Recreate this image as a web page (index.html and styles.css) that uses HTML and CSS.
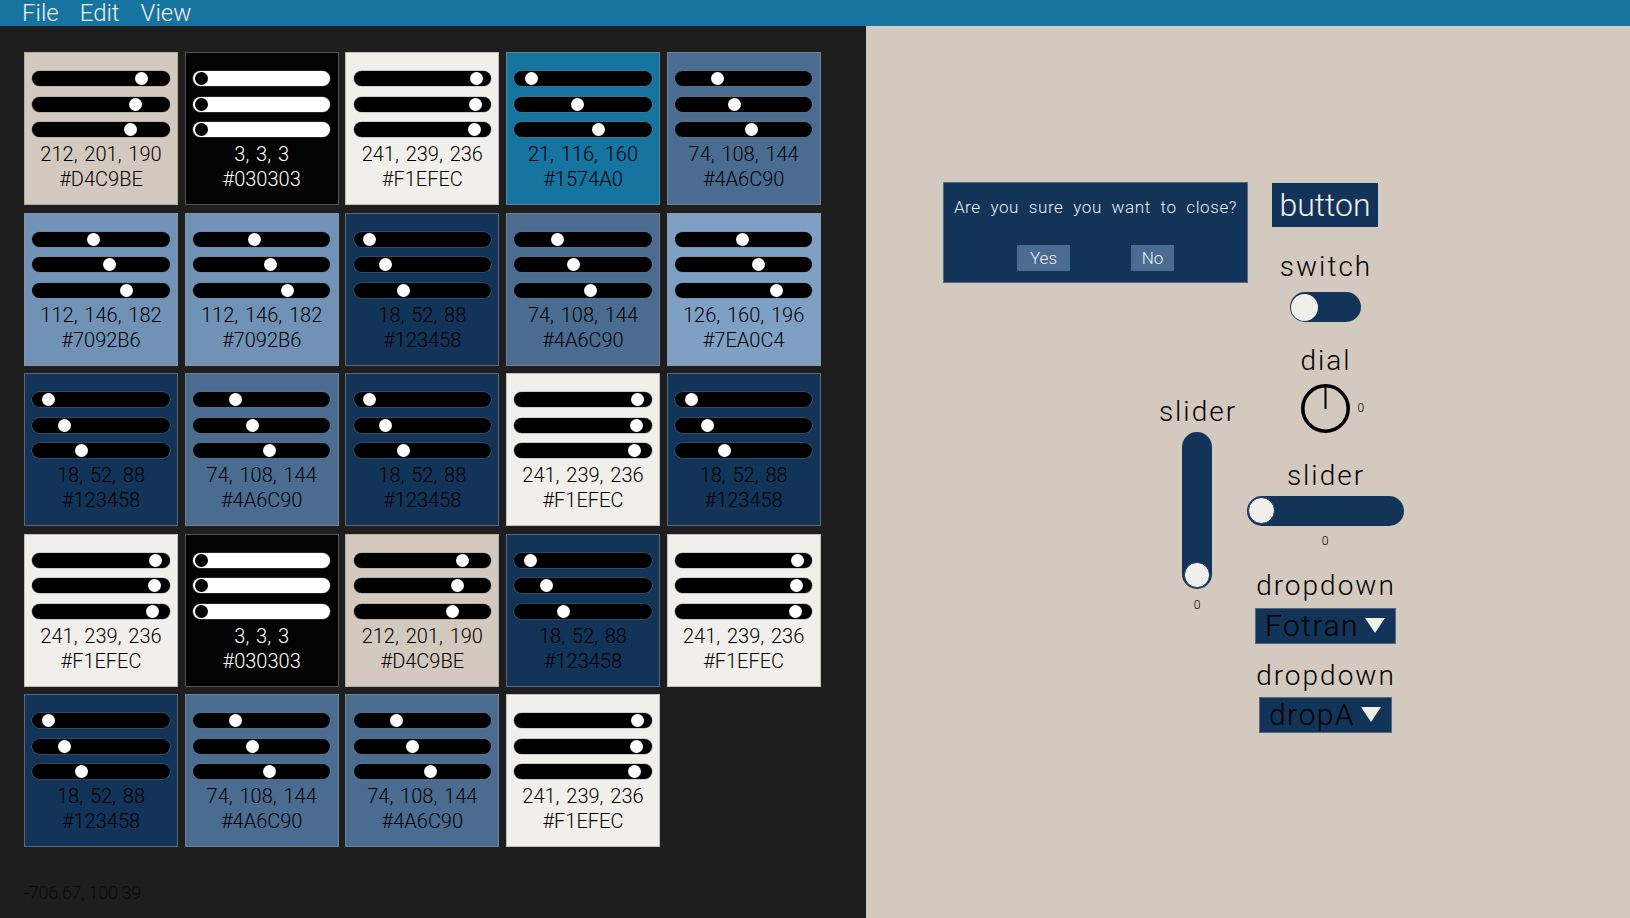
FILE: index.html
```html
<!DOCTYPE html>
<html lang="en">
<head>
<meta charset="utf-8">
<title>Palette</title>
<link rel="stylesheet" href="styles.css">
</head>
<body>
<header class="menubar">
  <span class="menu-item">File</span>
  <span class="menu-item">Edit</span>
  <span class="menu-item">View</span>
</header>
<div class="main">
  <section class="swatches">
    <div class="grid">
      <div class="tile c-d4"><div class="track"><span class="knob" style="--v:212"></span></div><div class="track"><span class="knob" style="--v:201"></span></div><div class="track"><span class="knob" style="--v:190"></span></div><p class="info">212, 201, 190<br>#D4C9BE</p></div>
      <div class="tile c-03"><div class="track"><span class="knob" style="--v:3"></span></div><div class="track"><span class="knob" style="--v:3"></span></div><div class="track"><span class="knob" style="--v:3"></span></div><p class="info">3, 3, 3<br>#030303</p></div>
      <div class="tile c-f1"><div class="track"><span class="knob" style="--v:241"></span></div><div class="track"><span class="knob" style="--v:239"></span></div><div class="track"><span class="knob" style="--v:236"></span></div><p class="info">241, 239, 236<br>#F1EFEC</p></div>
      <div class="tile c-15"><div class="track"><span class="knob" style="--v:21"></span></div><div class="track"><span class="knob" style="--v:116"></span></div><div class="track"><span class="knob" style="--v:160"></span></div><p class="info">21, 116, 160<br>#1574A0</p></div>
      <div class="tile c-4a"><div class="track"><span class="knob" style="--v:74"></span></div><div class="track"><span class="knob" style="--v:108"></span></div><div class="track"><span class="knob" style="--v:144"></span></div><p class="info">74, 108, 144<br>#4A6C90</p></div>

      <div class="tile c-70"><div class="track"><span class="knob" style="--v:112"></span></div><div class="track"><span class="knob" style="--v:146"></span></div><div class="track"><span class="knob" style="--v:182"></span></div><p class="info">112, 146, 182<br>#7092B6</p></div>
      <div class="tile c-70"><div class="track"><span class="knob" style="--v:112"></span></div><div class="track"><span class="knob" style="--v:146"></span></div><div class="track"><span class="knob" style="--v:182"></span></div><p class="info">112, 146, 182<br>#7092B6</p></div>
      <div class="tile c-12"><div class="track"><span class="knob" style="--v:18"></span></div><div class="track"><span class="knob" style="--v:52"></span></div><div class="track"><span class="knob" style="--v:88"></span></div><p class="info">18, 52, 88<br>#123458</p></div>
      <div class="tile c-4a"><div class="track"><span class="knob" style="--v:74"></span></div><div class="track"><span class="knob" style="--v:108"></span></div><div class="track"><span class="knob" style="--v:144"></span></div><p class="info">74, 108, 144<br>#4A6C90</p></div>
      <div class="tile c-7e"><div class="track"><span class="knob" style="--v:126"></span></div><div class="track"><span class="knob" style="--v:160"></span></div><div class="track"><span class="knob" style="--v:196"></span></div><p class="info">126, 160, 196<br>#7EA0C4</p></div>

      <div class="tile c-12"><div class="track"><span class="knob" style="--v:18"></span></div><div class="track"><span class="knob" style="--v:52"></span></div><div class="track"><span class="knob" style="--v:88"></span></div><p class="info">18, 52, 88<br>#123458</p></div>
      <div class="tile c-4a"><div class="track"><span class="knob" style="--v:74"></span></div><div class="track"><span class="knob" style="--v:108"></span></div><div class="track"><span class="knob" style="--v:144"></span></div><p class="info">74, 108, 144<br>#4A6C90</p></div>
      <div class="tile c-12"><div class="track"><span class="knob" style="--v:18"></span></div><div class="track"><span class="knob" style="--v:52"></span></div><div class="track"><span class="knob" style="--v:88"></span></div><p class="info">18, 52, 88<br>#123458</p></div>
      <div class="tile c-f1"><div class="track"><span class="knob" style="--v:241"></span></div><div class="track"><span class="knob" style="--v:239"></span></div><div class="track"><span class="knob" style="--v:236"></span></div><p class="info">241, 239, 236<br>#F1EFEC</p></div>
      <div class="tile c-12"><div class="track"><span class="knob" style="--v:18"></span></div><div class="track"><span class="knob" style="--v:52"></span></div><div class="track"><span class="knob" style="--v:88"></span></div><p class="info">18, 52, 88<br>#123458</p></div>

      <div class="tile c-f1"><div class="track"><span class="knob" style="--v:241"></span></div><div class="track"><span class="knob" style="--v:239"></span></div><div class="track"><span class="knob" style="--v:236"></span></div><p class="info">241, 239, 236<br>#F1EFEC</p></div>
      <div class="tile c-03"><div class="track"><span class="knob" style="--v:3"></span></div><div class="track"><span class="knob" style="--v:3"></span></div><div class="track"><span class="knob" style="--v:3"></span></div><p class="info">3, 3, 3<br>#030303</p></div>
      <div class="tile c-d4"><div class="track"><span class="knob" style="--v:212"></span></div><div class="track"><span class="knob" style="--v:201"></span></div><div class="track"><span class="knob" style="--v:190"></span></div><p class="info">212, 201, 190<br>#D4C9BE</p></div>
      <div class="tile c-12"><div class="track"><span class="knob" style="--v:18"></span></div><div class="track"><span class="knob" style="--v:52"></span></div><div class="track"><span class="knob" style="--v:88"></span></div><p class="info">18, 52, 88<br>#123458</p></div>
      <div class="tile c-f1"><div class="track"><span class="knob" style="--v:241"></span></div><div class="track"><span class="knob" style="--v:239"></span></div><div class="track"><span class="knob" style="--v:236"></span></div><p class="info">241, 239, 236<br>#F1EFEC</p></div>

      <div class="tile c-12"><div class="track"><span class="knob" style="--v:18"></span></div><div class="track"><span class="knob" style="--v:52"></span></div><div class="track"><span class="knob" style="--v:88"></span></div><p class="info">18, 52, 88<br>#123458</p></div>
      <div class="tile c-4a"><div class="track"><span class="knob" style="--v:74"></span></div><div class="track"><span class="knob" style="--v:108"></span></div><div class="track"><span class="knob" style="--v:144"></span></div><p class="info">74, 108, 144<br>#4A6C90</p></div>
      <div class="tile c-4a"><div class="track"><span class="knob" style="--v:74"></span></div><div class="track"><span class="knob" style="--v:108"></span></div><div class="track"><span class="knob" style="--v:144"></span></div><p class="info">74, 108, 144<br>#4A6C90</p></div>
      <div class="tile c-f1"><div class="track"><span class="knob" style="--v:241"></span></div><div class="track"><span class="knob" style="--v:239"></span></div><div class="track"><span class="knob" style="--v:236"></span></div><p class="info">241, 239, 236<br>#F1EFEC</p></div>
    </div>
    <p class="status">-706.67, 100.39</p>
  </section>

  <section class="canvas">
    <div class="left-col">
      <div class="dialog">
        <p class="dialog-msg">Are you sure you want to close?</p>
        <div class="dialog-actions">
          <button class="dlg-btn yes">Yes</button>
          <button class="dlg-btn no">No</button>
        </div>
      </div>
      <div class="vgroup">
        <div class="label vlabel">slider</div>
        <div class="vslider"><span class="vknob"></span></div>
        <div class="value vvalue">0</div>
      </div>
    </div>
    <div class="right-col">
      <button class="big-btn">button</button>
      <div class="label l-switch">switch</div>
      <div class="switch"><span class="switch-knob"></span></div>
      <div class="label l-dial">dial</div>
      <div class="dial-wrap">
        <svg class="dial" width="49" height="49" viewBox="0 0 49 49"><circle cx="24.5" cy="24.5" r="22.7" fill="none" stroke="#000" stroke-width="3.6"/><line x1="24.5" y1="1" x2="24.5" y2="25" stroke="#000" stroke-width="2"/></svg>
        <span class="dial-val">0</span>
      </div>
      <div class="label l-hslider">slider</div>
      <div class="hslider"><span class="hknob"></span></div>
      <div class="value hvalue">0</div>
      <div class="label l-dd1">dropdown</div>
      <div class="dropdown dd1"><span>Fotran</span><svg width="20" height="15" viewBox="0 0 20 15"><polygon points="0,0 20,0 10,15" fill="#F1EFEC"/></svg></div>
      <div class="label l-dd2">dropdown</div>
      <div class="dropdown dd2"><span>dropA</span><svg width="20" height="15" viewBox="0 0 20 15"><polygon points="0,0 20,0 10,15" fill="#F1EFEC"/></svg></div>
    </div>
  </section>
</div>
</body>
</html>
```

FILE: styles.css
```css
* { box-sizing: border-box; margin: 0; padding: 0; }
html, body { width: 1630px; height: 918px; overflow: hidden; }
body {
  font-family: Roboto, "Liberation Sans", sans-serif;
  font-weight: 300;
  background: #D4C9BE;
  display: flex;
  flex-direction: column;
  color: #000;
}
button { font: inherit; border: none; cursor: default; }

.menubar {
  height: 26px;
  flex: 0 0 26px;
  background: #1574A0;
  display: flex;
  align-items: center;
  padding-left: 22px;
  gap: 21px;
  color: #F1EFEC;
  font-size: 24px;
  line-height: 26px;
}

.main { flex: 1; display: flex; min-height: 0; }

.swatches {
  width: 866px;
  flex: 0 0 866px;
  background: #1e1e1e;
  padding: 26px 0 0 24px;
  display: flex;
  flex-direction: column;
}
.grid {
  display: grid;
  grid-template-columns: repeat(5, 154px);
  grid-auto-rows: 153px;
  column-gap: 6.67px;
  row-gap: 7.5px;
}
.tile {
  padding: 18px 0 0 7.3px;
  border: 1px solid rgba(150, 150, 150, 0.55);
  display: flex;
  flex-direction: column;
}
.track {
  position: relative;
  width: 137.3px;
  height: 15px;
  border-radius: 7.5px;
  background: #000;
  margin-bottom: 10.5px;
  box-shadow: 0 0 0 0.6px rgba(120,120,120,0.6);
}
.track:nth-child(3) { margin-bottom: 0; }
.knob {
  position: absolute;
  top: 1px;
  left: calc(1px + var(--v) * 122px / 255);
  width: 13px;
  height: 13px;
  border-radius: 50%;
  background: #fff;
}
.info {
  margin: 5px 0 0 -7.3px;
  text-align: center;
  font-size: 20px;
  line-height: 25px;
  word-spacing: 2px;
  color: #000;
}
.c-d4 { background: #D4C9BE; }
.c-03 { background: #030303; }
.c-f1 { background: #F1EFEC; }
.c-15 { background: #1574A0; }
.c-4a { background: #4A6C90; }
.c-70 { background: #7092B6; }
.c-12 { background: #123458; }
.c-7e { background: #7EA0C4; }
.c-03 .info { color: #fff; }
.c-03 .track { background: #fff; }
.c-03 .knob { background: #000; }

.status {
  margin-top: 36px;
  font-size: 18px;
  line-height: 20px;
  letter-spacing: -0.3px;
  color: #0b0b0b;
}

/* right canvas */
.canvas {
  flex: 1;
  display: flex;
  align-items: flex-start;
  padding: 156px 0 0 77px;
}
.left-col {
  width: 303px;
  display: flex;
  flex-direction: column;
}
.dialog {
  width: 305px;
  height: 101px;
  background: #123458;
  border: 1px solid #5a6a7c;
  padding-top: 14px;
  color: #F1EFEC;
  display: flex;
  flex-direction: column;
  align-items: center;
}
.dialog-msg {
  font-size: 17px;
  line-height: 20px;
  letter-spacing: 0.6px;
  word-spacing: 5px;
}
.dialog-actions {
  margin-top: 28px;
  display: flex;
  gap: 61px;
}
.dlg-btn {
  height: 26px;
  background: #4A6C90;
  color: #F1EFEC;
  font-size: 17px;
  line-height: 26px;
  text-align: center;
}
.yes { width: 53px; }
.no { width: 43px; }

.label {
  font-size: 28px;
  line-height: 30px;
  letter-spacing: 2px;
  text-indent: 2px;
  text-align: center;
  color: #000;
}
.value {
  font-size: 12px;
  line-height: 14px;
  text-align: center;
  color: #000;
}

.vgroup {
  align-self: flex-end;
  margin-right: 9px;
  width: 80px;
  display: flex;
  flex-direction: column;
  align-items: center;
}
.vlabel { margin-top: 114px; }
.vslider {
  position: relative;
  margin-top: 5px;
  width: 30px;
  height: 157px;
  border-radius: 15px;
  background: #123458;
}
.vknob {
  position: absolute;
  left: 2px;
  bottom: 1.5px;
  width: 25.5px;
  height: 25.5px;
  border-radius: 50%;
  background: #F1EFEC;
  border: 1px solid #123458;
}
.vvalue { margin-top: 9px; }

.right-col {
  width: 158px;
  display: flex;
  flex-direction: column;
  align-items: center;
}
.big-btn {
  margin-top: 1px;
  width: 106px;
  height: 44px;
  background: #123458;
  color: #F1EFEC;
  font-size: 32px;
  line-height: 42px;
}
.l-switch { margin-top: 25px; }
.switch {
  position: relative;
  margin-top: 10px;
  width: 71px;
  height: 30px;
  border-radius: 15px;
  background: #123458;
}
.switch-knob {
  position: absolute;
  left: 1.5px;
  top: 1.5px;
  width: 27px;
  height: 27px;
  border-radius: 50%;
  background: #F1EFEC;
}
.l-dial { margin-top: 24px; }
.dial-wrap {
  position: relative;
  margin-top: 7.5px;
  width: 49px;
  height: 49px;
}
.dial { display: block; }
.dial-val {
  position: absolute;
  left: 57px;
  top: 17px;
  font-size: 12px;
  line-height: 14px;
}
.l-hslider { margin-top: 28px; }
.hslider {
  position: relative;
  margin-top: 5px;
  width: 157px;
  height: 30px;
  border-radius: 15px;
  background: #123458;
}
.hknob {
  position: absolute;
  left: 1px;
  top: 1.5px;
  width: 27px;
  height: 27px;
  border-radius: 50%;
  background: #F1EFEC;
  border: 1px solid #123458;
}
.hvalue { margin-top: 8px; }
.l-dd1 { margin-top: 23px; }
.dropdown {
  margin-top: 7px;
  height: 36px;
  background: #123458;
  border: 1px solid #56687c;
  display: flex;
  align-items: center;
  justify-content: center;
  gap: 6px;
  font-size: 30px;
  letter-spacing: 1.5px;
  color: #000;
}
.dropdown svg { display: block; }
.dd1 { width: 141px; }
.dd2 { width: 133px; margin-top: 6px; }
.l-dd2 { margin-top: 17px; }
```
